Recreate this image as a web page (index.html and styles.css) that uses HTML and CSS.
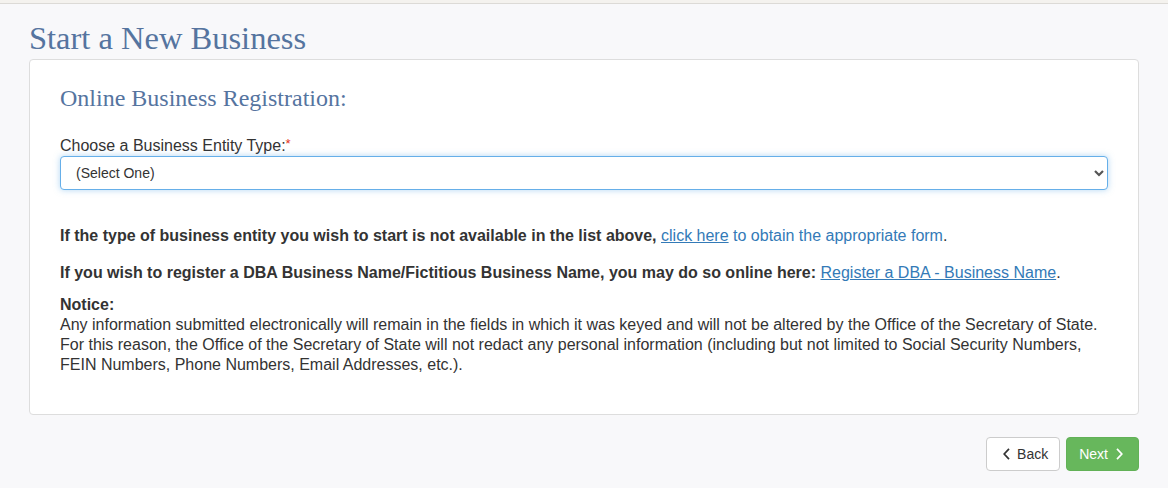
FILE: index.html
```html
<!DOCTYPE html>
<html lang="en">
<head>
<meta charset="utf-8">
<title>Start a New Business</title>
<link rel="stylesheet" href="styles.css">
</head>
<body>
<div class="topbar"></div>
<main class="page">
  <h1 class="page-title">Start a New Business</h1>
  <section class="card">
    <h2 class="card-title">Online Business Registration:</h2>
    <div class="field">
      <label class="field-label" for="entity">Choose a Business Entity Type:<span class="req">*</span></label>
      <div class="select-wrap">
        <select id="entity" class="select">
          <option>(Select One)</option>
        </select>
        <svg class="chev" width="10" height="7" viewBox="0 0 10 7"><path d="M1 1 L5 5 L9 1" fill="none" stroke="#555" stroke-width="2.2"/></svg>
      </div>
    </div>
    <p class="info"><strong>If the type of business entity you wish to start is not available in the list above,</strong> <a href="#">click here</a><span class="blue"> to obtain the appropriate form</span>.</p>
    <p class="info"><strong>If you wish to register a DBA Business Name/Fictitious Business Name, you may do so online here:</strong> <a href="#">Register a DBA - Business Name</a>.</p>
    <div class="notice">
      <strong>Notice:</strong><br>
      Any information submitted electronically will remain in the fields in which it was keyed and will not be altered by the Office of the Secretary of State. For this reason, the Office of the Secretary of State will not redact any personal information (including but not limited to Social Security Numbers, FEIN Numbers, Phone Numbers, Email Addresses, etc.).
    </div>
  </section>
  <div class="actions">
    <button class="btn btn-back" type="button"><svg width="7" height="12" viewBox="0 0 7 12"><path d="M6 0.8 L1.2 6 L6 11.2" fill="none" stroke="#333" stroke-width="1.7"/></svg>Back</button>
    <button class="btn btn-next" type="button">Next<svg width="7" height="12" viewBox="0 0 7 12"><path d="M1 0.8 L5.8 6 L1 11.2" fill="none" stroke="#fff" stroke-width="1.7"/></svg></button>
  </div>
</main>
</body>
</html>
```

FILE: styles.css
```css
html, body {
  margin: 0;
  padding: 0;
}
body {
  background: #f8f8fa;
  font-family: "Liberation Sans", Arial, sans-serif;
  font-size: 16px;
  line-height: 20px;
  color: #333;
}
.topbar {
  height: 3px;
  background: #f4f2ee;
  border-bottom: 1px solid #dcdad6;
}
.page {
  padding: 0 29px;
}
.page-title {
  margin: 0;
  padding-top: 16px;
  font-family: "Liberation Serif", "Times New Roman", serif;
  font-weight: normal;
  font-size: 32.5px;
  line-height: 36px;
  color: #55749f;
}
.card {
  margin-top: 3px;
  background: #fff;
  border: 1px solid #dddddd;
  border-radius: 4px;
  padding: 25px 30px 39px 30px;
}
.card-title {
  margin: 0 0 25px 0;
  font-family: "Liberation Serif", "Times New Roman", serif;
  font-weight: normal;
  font-size: 24px;
  line-height: 26px;
  color: #55749f;
}
.field {
  margin-bottom: 36px;
}
.field-label {
  display: block;
  line-height: 20px;
}
.req {
  color: #e2321c;
  font-size: 13px;
  line-height: 0;
  vertical-align: 3px;
}
.select-wrap {
  position: relative;
}
.select {
  display: block;
  width: 100%;
  height: 34px;
  box-sizing: border-box;
  appearance: none;
  -webkit-appearance: none;
  background: #fff;
  border: 1px solid #66afe9;
  border-radius: 4px;
  box-shadow: 0 0 6px rgba(102, 175, 233, 0.5);
  padding: 0 15px;
  font-family: "Liberation Sans", Arial, sans-serif;
  font-size: 14px;
  color: #333;
  outline: none;
}
.chev {
  position: absolute;
  right: 4px;
  top: 14px;
}
.info {
  margin: 0 0 17px 0;
}
.info + .notice {
  margin-top: -5px;
}
.info a {
  color: #337ab7;
  text-decoration: underline;
}
.blue {
  color: #337ab7;
}
.actions {
  display: flex;
  justify-content: flex-end;
  gap: 6px;
  margin-top: 22px;
}
.btn {
  display: flex;
  align-items: center;
  height: 34px;
  box-sizing: border-box;
  border-radius: 4px;
  font-family: "Liberation Sans", Arial, sans-serif;
  font-size: 14px;
}
.btn-back {
  background: #fff;
  border: 1px solid #cccccc;
  color: #333;
  padding: 0 11px 0 16px;
  gap: 7px;
}
.btn-next {
  background: #67b75c;
  border: 1px solid #62b157;
  color: #fff;
  padding: 0 15px 0 12px;
  gap: 8px;
}
```
